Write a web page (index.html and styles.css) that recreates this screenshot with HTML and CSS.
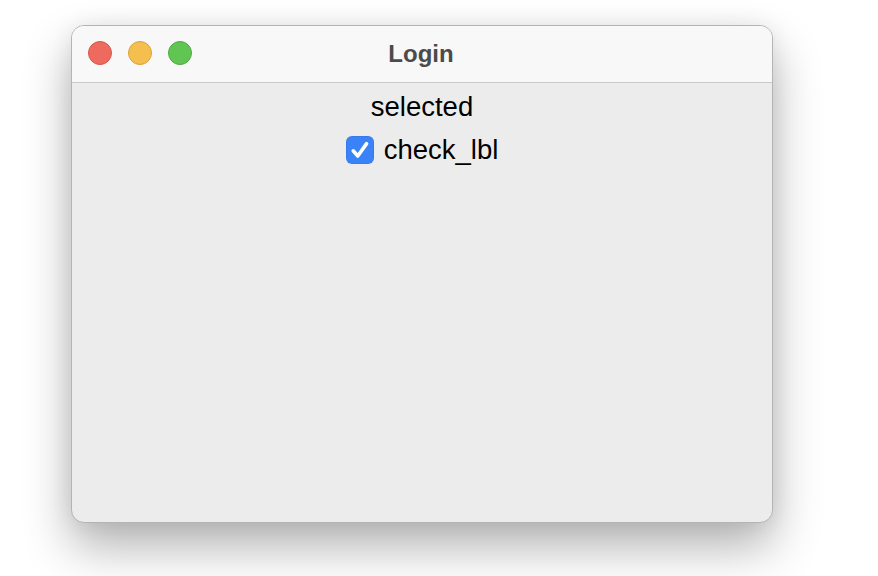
FILE: index.html
```html
<!DOCTYPE html>
<html>
<head>
<meta charset="utf-8">
<link rel="stylesheet" href="styles.css">
</head>
<body>
<div class="window">
  <div class="titlebar">
    <div class="lights">
      <span class="light red"></span>
      <span class="light yellow"></span>
      <span class="light green"></span>
    </div>
    <div class="title">Login</div>
  </div>
  <div class="content">
    <div class="label">selected</div>
    <label class="check-row">
      <span class="checkbox">
        <svg width="28" height="28" viewBox="0 0 28 28"><path d="M7.2 14.8 L11.8 20 L20.6 7.6" fill="none" stroke="#fff" stroke-width="3.6" stroke-linecap="round" stroke-linejoin="round"/></svg>
      </span>
      <span class="check-text">check_lbl</span>
    </label>
  </div>
</div>
</body>
</html>
```
FILE: styles.css
```css
html, body {
  margin: 0;
  padding: 0;
  background: #ffffff;
  width: 878px;
  height: 576px;
  overflow: hidden;
}
body {
  font-family: "Liberation Sans", Arial, sans-serif;
}
.window {
  margin: 25px 0 0 71px;
  width: 700px;
  height: 496px;
  border: 1px solid #b4b4b4;
  border-radius: 13px;
  background: #ececec;
  overflow: hidden;
  box-shadow: 0 24px 48px rgba(0, 0, 0, 0.3), 0 0 22px rgba(0, 0, 0, 0.07);
  display: flex;
  flex-direction: column;
}
.titlebar {
  position: relative;
  height: 56px;
  background: #f8f8f8;
  border-bottom: 1px solid #c9c9c9;
  display: flex;
  align-items: center;
  justify-content: center;
}
.lights {
  position: absolute;
  left: 16px;
  top: 15px;
  display: flex;
  gap: 16px;
}
.light {
  width: 22px;
  height: 22px;
  border-radius: 50%;
  border: 1px solid rgba(0, 0, 0, 0.12);
}
.red { background: #ee6a5e; border-color: #d5574b; }
.yellow { background: #f5bf4f; border-color: #d9a23b; }
.green { background: #61c554; border-color: #4ea943; }
.title {
  font-weight: bold;
  font-size: 24px;
  color: #4b4b4b;
  margin-left: -2px;
}
.content {
  flex: 1;
  display: flex;
  flex-direction: column;
  align-items: center;
  padding-top: 8px;
  gap: 11px;
  color: #000;
  font-size: 27.5px;
  line-height: 32px;
}
.label {
  height: 32px;
}
.check-row {
  display: flex;
  align-items: center;
  gap: 10px;
  height: 32px;
}
.checkbox {
  width: 28px;
  height: 28px;
  border-radius: 6px;
  background: #3a82f7;
  display: flex;
  align-items: center;
  justify-content: center;
  box-shadow: inset 0 0 0 0.5px rgba(0,0,0,0.1);
}
.checkbox svg { display: block; }
```
